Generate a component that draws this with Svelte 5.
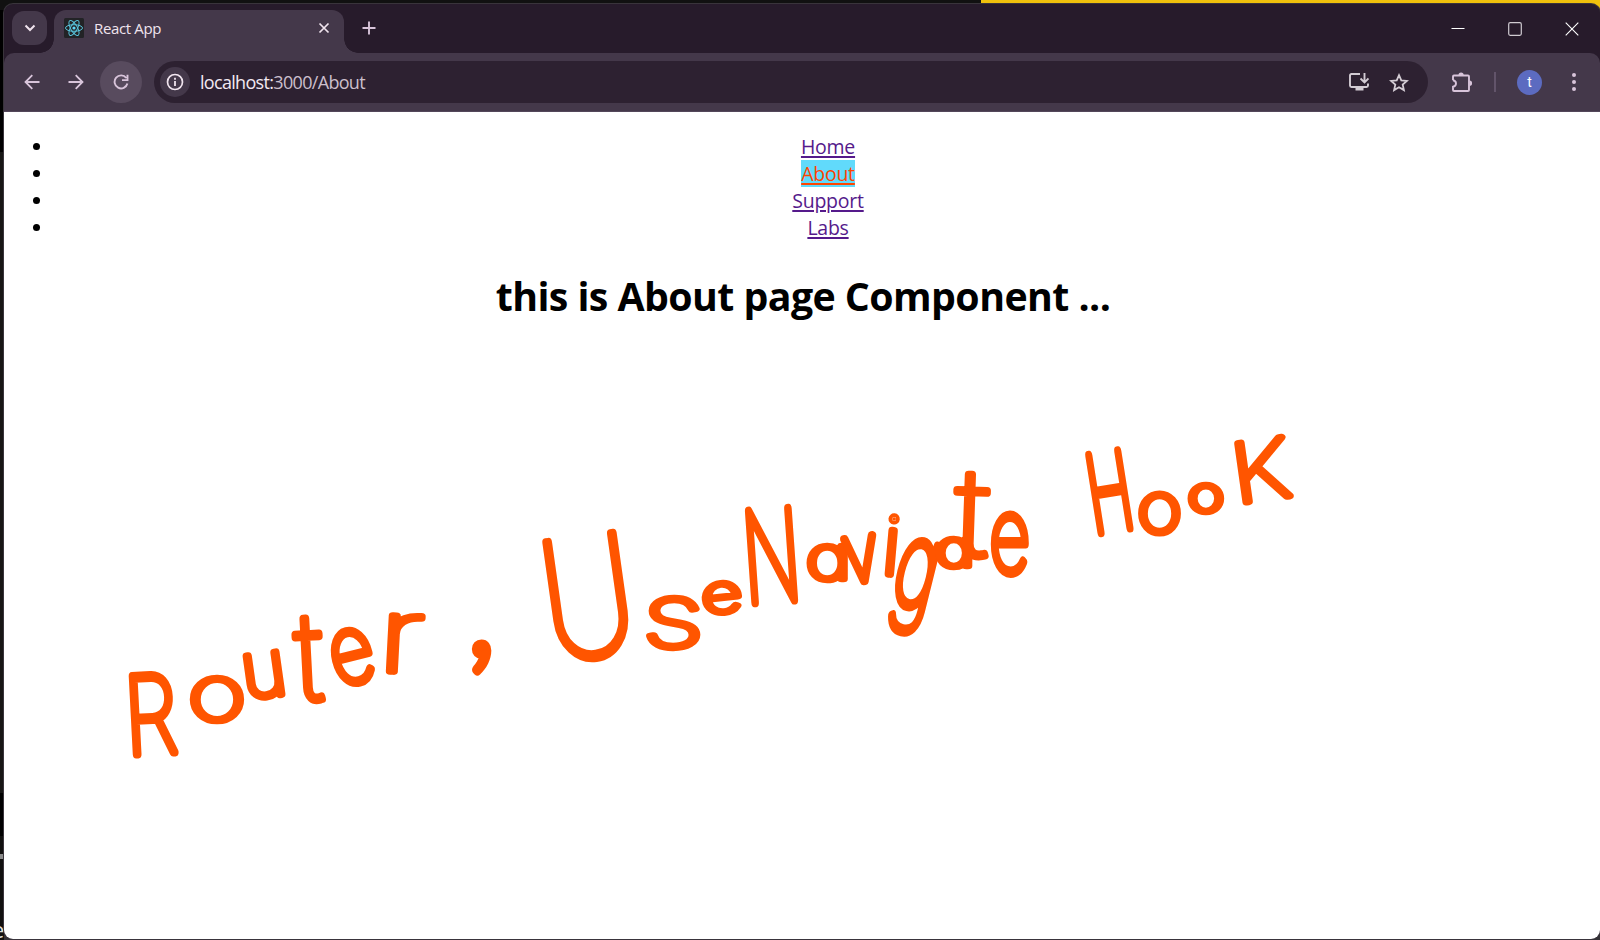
<script>
  import { onMount } from 'svelte';

  const links = ['Home', 'About', 'Support', 'Labs'];
  const active = 'About';

  // Marker note: each letter with the box its ink fills (left, top, right, bottom) and its tilt.
  const note = [
    ['R', 130, 671, 177, 757, -3], ['o', 190, 673, 244, 725, 0], ['u', 245, 650, 283, 701, -8],
    ['t', 292, 614, 325, 706, -3], ['e', 331, 626, 374, 688, -14], ['r', 387, 612, 424, 676, 3],
    [',', 471, 639, 492, 676, 0, 'Lato'],
    ['U', 549, 533, 627, 662, -8], ['s', 646, 593, 700, 653, 0], ['e', 702, 579, 742, 617, -6],
    ['N', 747, 506, 796, 605, -4], ['a', 806, 542, 843, 584, 0], ['v', 842, 533, 880, 585, -8],
    ['i', 886, 513, 898, 578, 5], ['g', 893, 536, 932, 637, 14], ['a', 935, 535, 968, 571, 0],
    ['t', 952, 470, 991, 562, 2], ['e', 990, 511, 1030, 578, 0],
    ['H', 1090, 449, 1129, 534, -9], ['o', 1138, 489, 1181, 537, 0], ['o', 1188, 481, 1224, 516, 0],
    ['K', 1238, 436, 1290, 503, -8]
  ];
  const pen = 7.6;
  let letters = $state([]);

  onMount(() => {
    const ctx = document.createElement('canvas').getContext('2d');
    letters = note.map(([ch, l, t, r, b, tilt, face = 'Inter']) => {
      const weight = face === 'Inter' ? 100 : 300;
      ctx.font = `${weight} 100px ${face}`;
      const m = ctx.measureText(ch);
      const gw = m.actualBoundingBoxRight + m.actualBoundingBoxLeft;
      const gh = m.actualBoundingBoxAscent + m.actualBoundingBoxDescent;
      const sx = ch === 'i' ? 0.8 : (r - l - pen) / gw;
      const sy = (b - t - pen) / gh;
      const ox = (m.actualBoundingBoxRight - m.actualBoundingBoxLeft) / 2;
      const oy = (m.actualBoundingBoxDescent - m.actualBoundingBoxAscent) / 2;
      return {
        ch,
        lato: face === 'Lato',
        nib: pen / Math.sqrt(sx * sy),
        move: `translate(${(l + r) / 2} ${(t + b) / 2}) rotate(${tilt}) scale(${sx} ${sy}) translate(${-ox} ${-oy})`
      };
    });
  });
</script>

<div class="desktop">
  <div class="behind-top"></div>
  <span class="behind-text">e</span>
  <div class="window">
    <header class="tabs">
      <div class="tab-search">
        <svg width="12" height="8" viewBox="0 0 12 8"><path d="M1.500 1.500 6 6l4.500-4.500" fill="none" stroke="#f0e4ee" stroke-width="2"/></svg>
      </div>
      <div class="tab">
        <svg class="favicon" width="20" height="20" viewBox="0 0 20 20">
          <rect width="20" height="20" rx="1.500" fill="#222326"/>
          <g fill="none" stroke="#58c4dc" stroke-width="1">
            <ellipse cx="10" cy="10" rx="8.500" ry="3.300"/>
            <ellipse cx="10" cy="10" rx="8.500" ry="3.300" transform="rotate(60 10 10)"/>
            <ellipse cx="10" cy="10" rx="8.500" ry="3.300" transform="rotate(120 10 10)"/>
          </g>
          <circle cx="10" cy="10" r="1.600" fill="#61dafb"/>
        </svg>
        <span class="title">React App</span>
        <svg width="12" height="12" viewBox="0 0 12 12"><path d="m1.500 1.500 9 9m0-9-9 9" stroke="#f0e4ee" stroke-width="1.700"/></svg>
      </div>
      <svg class="plus" width="14" height="14" viewBox="0 0 14 14"><path d="M7 .5v13M.5 7h13" stroke="#d8c4da" stroke-width="1.900"/></svg>
      <div class="controls">
        <svg width="14" height="14" viewBox="0 0 14 14"><path d="M.5 6.500h13" stroke="#fff"/></svg>
        <svg width="14" height="14" viewBox="0 0 14 14"><rect x=".7" y=".7" width="12.600" height="12.600" rx="1.500" fill="none" stroke="#d0cbd1" stroke-width="1.200"/></svg>
        <svg width="14" height="14" viewBox="0 0 14 14"><path d="m.7.7 12.600 12.600m0-12.600L.7 13.300" stroke="#fff" stroke-width="1.100"/></svg>
      </div>
    </header>
    <div class="toolbar">
      <div class="nav">
        <svg width="16" height="16" viewBox="0 0 16 16"><path d="M15.500 8H1.800M8.300 1.200 1.500 8l6.800 6.800" fill="none" stroke="#d8c4da" stroke-width="1.800"/></svg>
        <svg width="16" height="16" viewBox="0 0 16 16"><path d="M.5 8h13.700M7.700 1.200 14.500 8l-6.800 6.800" fill="none" stroke="#d8c4da" stroke-width="1.800"/></svg>
      </div>
      <div class="reload">
        <svg width="16" height="16" viewBox="0 0 16 16"><path d="M13.300 4A6.500 6.500 0 1 0 14.400 9.500M14.500.7v5.400H9" fill="none" stroke="#d8c4da" stroke-width="1.900"/></svg>
      </div>
      <div class="address">
        <div class="info">
          <svg width="18" height="18" viewBox="0 0 18 18"><circle cx="9" cy="9" r="7.500" fill="none" stroke="#f0e4ee" stroke-width="1.700"/><path d="M9 8v5M9 4.800v1.900" stroke="#f0e4ee" stroke-width="1.800"/></svg>
        </div>
        <div class="url">localhost:<span>3000/About</span></div>
        <svg width="20" height="18" viewBox="0 0 20 18"><path d="M11 1H2.500Q1 1 1 2.500v10Q1 14 2.500 14h15q1.500 0 1.500-1.500V10.500M15.500 0v9M11.500 5.500l4 4 4-4" fill="none" stroke="#d3ccd4" stroke-width="1.900"/><path d="M6.500 14h8v3.500h-8z" fill="#d3ccd4"/></svg>
        <svg class="star" width="20" height="19" viewBox="0 0 20 19"><path d="m10 2.200 2.300 5.200 5.600.5-4.200 3.700 1.200 5.500-4.900-2.900-4.900 2.900 1.200-5.500-4.200-3.700 5.600-.5z" fill="none" stroke="#d3ccd4" stroke-width="1.800"/></svg>
      </div>
      <svg class="puzzle" width="22" height="21" viewBox="0 0 22 21"><path d="M2 8.200V4.500Q2 3.500 3 3.500H17Q18 3.500 18 4.500V18Q18 19 17 19H3Q2 19 2 18v-3.200q3-.5 3-3.300T2 8.200" fill="none" stroke="#d8c4da" stroke-width="1.900"/><path d="M7.500 3a2.600 2.600 0 0 1 5.200 0zM18.500 8.600a2.600 2.600 0 0 1 0 5.200z" fill="#d8c4da"/></svg>
      <i class="divider"></i>
      <div class="avatar">t</div>
      <svg class="dots" width="4" height="18" viewBox="0 0 4 18" fill="#d8c4da"><circle cx="2" cy="2" r="2"/><circle cx="2" cy="9" r="2"/><circle cx="2" cy="16" r="2"/></svg>
    </div>
    <main>
      <ul>
        {#each links as name}
          <li><a href="#{name}" class:active={name === active}>{name}</a></li>
        {/each}
      </ul>
      <h1>this is About page Component ...</h1>
    </main>
  </div>
  <svg class="ink" width="1600" height="940" viewBox="0 0 1600 940">
    {#each letters as g}
      <text class:lato={g.lato} transform={g.move} stroke-width={g.nib}>{g.ch}</text>
    {/each}
  </svg>
</div>

<style>
  :global(body) { margin: 0; overflow: hidden; }
  .desktop {
    position: relative;
    box-sizing: border-box;
    width: 1600px;
    height: 940px;
    padding: 4px 0 1px 4px;
    overflow: hidden;
    background: linear-gradient(#000 0 152px, #171615 152px 793px, #000 793px 836px, #11100f 836px 854px, #8a8a8a 854px 859px, #11100f 859px) 0 0 / 4px 100% no-repeat, #343236;
    font-family: "Open Sans", "Noto Sans", sans-serif;
  }
  .behind-top {
    position: absolute;
    inset: 0 0 auto 0;
    height: 10px;
    background: linear-gradient(90deg, #111 981px, #efc10c 981px);
  }
  .behind-text { position: absolute; left: -8px; top: 917px; font: 22px/24px "Open Sans", sans-serif; color: #ddd; }
  .window {
    position: relative;
    display: flex;
    flex-direction: column;
    height: 935px;
    border-radius: 9px;
    overflow: hidden;
    background: #271b2b;
    box-shadow: 0 0 0 1px #39343b;
  }
  .tabs { display: flex; height: 49px; flex: none; }
  .tab-search {
    display: grid;
    place-items: center;
    width: 35px;
    height: 34px;
    margin: 7px 7px 0 8px;
    border-radius: 12px;
    background: #44384a;
  }
  .tab {
    position: relative;
    box-sizing: border-box;
    display: flex;
    align-items: center;
    width: 290px;
    height: 43px;
    margin-top: 6px;
    padding: 0 14px 7px 10px;
    border-radius: 12px 12px 0 0;
    background: #44384a;
  }
  .tab::before, .tab::after {
    content: "";
    position: absolute;
    bottom: 0;
    width: 14px;
    height: 14px;
  }
  .tab::before { right: 100%; background: radial-gradient(circle at 0 0, transparent 13.5px, #44384a 14px); }
  .tab::after { left: 100%; background: radial-gradient(circle at 100% 0, transparent 13.5px, #44384a 14px); }
  .title { flex: 1; margin-left: 10px; font-size: 15px; letter-spacing: -0.35px; color: #f0e4ee; }
  .plus { margin: 17px 0 0 18px; }
  .controls { display: flex; gap: 43px; margin: 18px 21px 0 auto; }
  .toolbar {
    box-sizing: border-box;
    display: flex;
    align-items: center;
    height: 59px;
    flex: none;
    padding: 0 24px 0 20px;
    border-radius: 10px 10px 0 0;
    border-bottom: 1px solid #53475a;
    background: #44384a;
  }
  .nav { display: flex; gap: 28px; margin-right: 16px; }
  .reload { display: grid; place-items: center; width: 42px; height: 42px; border-radius: 50%; background: #584b5e; }
  .address {
    box-sizing: border-box;
    display: flex;
    align-items: center;
    width: 1275px;
    height: 42px;
    margin-left: 12px;
    padding: 0 19px 0 6px;
    border-radius: 21px;
    background: #2d2131;
  }
  .info { display: grid; place-items: center; width: 30px; height: 30px; border-radius: 50%; background: #44384a; }
  .url { flex: 1; margin-left: 10px; font-size: 18px; line-height: 28px; letter-spacing: -0.68px; color: #f2e9f1; }
  .url span { color: #cbbfcc; }
  .star { margin-left: 20px; }
  .puzzle { margin-left: 23px; }
  .divider { width: 2px; height: 20px; margin-left: 21px; background: #62546a; }
  .avatar {
    width: 25px;
    height: 25px;
    margin-left: 21px;
    border-radius: 50%;
    background: #5c6bc0;
    color: #fff;
    font: 400 14px/25px Roboto, sans-serif;
    text-align: center;
  }
  .dots { margin-left: 30px; }
  main { width: 1598px; flex: 1; background: #fff; color: #000; text-align: center; }
  ul { margin: 0; padding: 21px 0 0 50px; font-size: 19.5px; line-height: 27px; }
  li { letter-spacing: -0.25px; }
  a { color: #551a8b; text-decoration: underline; text-decoration-thickness: 2px; text-underline-offset: 2px; }
  .active { color: #ff4500; background: #61dafb; }
  h1 { margin: 28px 0 0; font-size: 39.3px; line-height: 54px; font-weight: 700; letter-spacing: -0.57px; }
  .ink { position: absolute; left: 0; top: 0; pointer-events: none; }
  .ink text {
    font: 100 100px Inter, sans-serif;
    font-feature-settings: "cv11";
    fill: #ff5500;
    stroke: #ff5500;
    stroke-linejoin: round;
    stroke-linecap: round;
  }
  .ink .lato { font: 300 100px Lato, sans-serif; }
</style>
